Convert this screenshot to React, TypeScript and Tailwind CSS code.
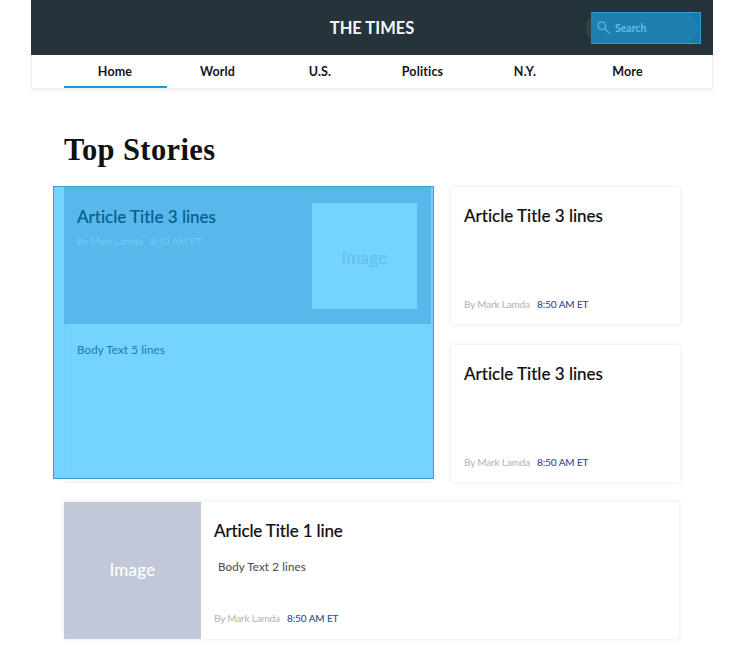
import React from "react";

const tabs = ["Home", "World", "U.S.", "Politics", "N.Y.", "More"];
const cardShadow = "shadow-[0_0_4px_rgba(0,0,0,0.11)]";
const titleText = "text-[17px] leading-6 font-medium whitespace-nowrap [-webkit-text-stroke:0.15px_currentColor]";
const bodyText = "text-[11.5px] leading-[18px] tracking-[0.15px] [-webkit-text-stroke:0.1px_currentColor]";

function Meta({ author, time }: { author: string; time: string }) {
  return (
    <div className="flex gap-[7px] whitespace-nowrap text-[10px] leading-[14px] [-webkit-text-stroke:0.1px_currentColor]">
      <span className={`w-[66px] tracking-[-0.18px] ${author}`}>By Mark Lamda</span>
      <span className={`tracking-[-0.1px] ${time}`}>8:50 AM ET</span>
    </div>
  );
}

function StoryCard() {
  return (
    <article className={`flex h-[137px] w-[229px] flex-col justify-between bg-white pt-[17px] pr-3 pb-[13px] pl-[13px] ${cardShadow}`}>
      <h2 className={`${titleText} text-[#111]`}>Article Title 3 lines</h2>
      <Meta author="text-[#b7b7b9]" time="text-[#304a8c]" />
    </article>
  );
}

function FeaturedStory() {
  return (
    <section className="relative h-[294px] w-[367px]">
      <div className="absolute top-[3px] left-0 h-[291px] w-[367px] shadow-[0_1px_4px_rgba(0,0,0,0.09)]" />
      <div className="absolute top-[-1px] left-[-11px] h-[293px] w-[381px] border border-[#3b9fcd] bg-[#75d3ff]" />
      <article className="relative h-[291px] border-l border-[#70cdf8]">
        <div className="ml-[-1px] flex h-[137px] justify-between bg-[#59b8eb] pt-[16px] pr-[14px] pl-[13px]">
          <div className="pt-[2px] whitespace-nowrap">
            <h2 className={`${titleText} text-[#07618f]`}>Article Title 3 lines</h2>
            <div className="mt-[5px]">
              <Meta author="text-[#70caf6]" time="text-[#70caf6]" />
            </div>
          </div>
          <div className="flex h-[106px] w-[105px] items-center justify-center bg-[#75d3ff] pt-[3px] text-[17px] tracking-[0.3px] text-[#62c0ee] [-webkit-text-stroke:0.1px_currentColor]">Image</div>
        </div>
        <p className={`mt-[17px] ml-[12px] ${bodyText} text-[#2381ad]`}>Body Text 5 lines</p>
      </article>
    </section>
  );
}

export default function App() {
  return (
    <div className="h-[656px] w-[744px] overflow-hidden bg-white font-['Lato',sans-serif] [font-variant-ligatures:none]">
      <div className="ml-[31px] w-[682px]">
        <header className="relative flex h-[55px] items-center justify-center bg-[#25333a]">
          <h1 className="pt-[2px] text-[16.5px] font-bold text-[#f4f8f8]">THE TIMES</h1>
          <div className="absolute top-[13px] left-[555px] h-[30px] w-[113px] rounded-full bg-[#344249]" />
          <div className="absolute top-[12px] left-[560px] flex h-8 w-[110px] items-center border border-[#329fd0] bg-[#1a7baa] pl-[5px]">
            <div className="absolute top-0 left-[-1px] h-[30px] w-[108px] rounded-r-full bg-[#1e80af]" />
            <svg className="relative size-[14px]" viewBox="0 0 14 14" fill="none" stroke="#4eb5e6" strokeWidth="1.4">
              <circle cx="4.8" cy="4.8" r="3.8" />
              <path d="M7.6 7.6 12.6 12.6" />
            </svg>
            <span className="relative ml-1 pt-px text-[10.5px] font-bold text-[#5ebeed]">Search</span>
          </div>
        </header>
        <nav className="flex h-[34px] border border-t-0 border-[#eeeeee] bg-white px-8 shadow-[0_2px_5px_rgba(0,0,0,0.05)]">
          {tabs.map((tab, i) => (
            <a key={tab} className={`h-[33px] w-[102.5px] shrink-0 pt-[8px] pr-[0.5px] text-center text-[12.5px] leading-[18px] font-bold tracking-[0.15px] text-[#151515] ${i === 0 ? "border-b-2 border-[#2598d2]" : ""}`}>{tab}</a>
          ))}
        </nav>
      </div>
      <main className="ml-16 w-[616px]">
        <h2 className="mt-[42px] h-14 pt-px font-['Liberation_Serif',serif] text-[30.5px] leading-9 font-bold tracking-[0.4px] whitespace-nowrap text-[#111]">Top Stories</h2>
        <div className="flex justify-between">
          <FeaturedStory />
          <div className="flex flex-col gap-[21px] pt-[0.4px]">
            <StoryCard />
            <StoryCard />
          </div>
        </div>
        <article className={`mt-5 flex h-[137px] w-[615px] bg-white ${cardShadow}`}>
          <div className="flex w-[137px] items-center justify-center bg-[#c1c8d7] pb-[3px] text-[17px] tracking-[0.3px] text-white [-webkit-text-stroke:0.1px_currentColor]">Image</div>
          <div className="flex flex-col pt-[17px] pl-[13px] whitespace-nowrap">
            <h2 className={`${titleText} tracking-[-0.15px] text-[#111]`}>Article Title 1 line</h2>
            <p className={`mt-[15px] mb-[35px] pl-1 ${bodyText} text-[#505052]`}>Body Text 2 lines</p>
            <Meta author="text-[#b7b7b9]" time="text-[#304a8c]" />
          </div>
        </article>
      </main>
    </div>
  );
}
